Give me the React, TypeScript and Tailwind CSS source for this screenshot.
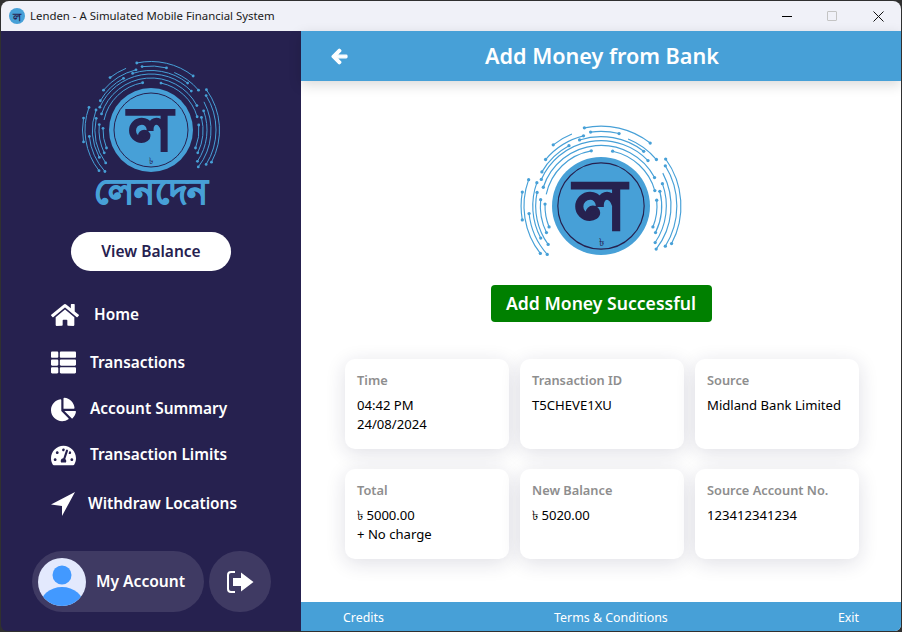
import React from 'react';
import {
  FaArrowLeft,
  FaChartPie,
  FaHome,
  FaTachometerAlt,
  FaThList,
} from 'react-icons/fa';

const BLUE = '#47a0d7';
const NAVY = '#26214f';

// r, start deg, end deg (clockwise from 12 o'clock), dot on start, dot on end
const ARCS: [number, number, number, boolean, boolean][] = [
  [68.5, -12, 38, true, true],
  [68.5, 54, 118, true, true],
  [66.5, -38, -22, true, false],
  [64, -8, 14, true, true],
  [62, 22, 50, false, true],
  [62, -50, -14, true, true],
  [65, 58, 122, true, true],
  [59.5, -18, 38, true, true],
  [60, 62, 128, false, true],
  [66, -128, -70, true, true],
  [68.5, -100, -80, true, true],
  [62, -132, -96, true, true],
  [58.5, -60, -28, true, true],
  [58.5, -118, -70, true, true],
  [56, -66, 46, true, true],
  [56, 70, 124, true, true],
  [56, -126, -78, true, true],
  [52, -72, 62, true, true],
  [52, 76, 116, true, true],
  [52, -116, -84, true, true],
  [48, -78, -10, false, true],
  [48, 12, 74, true, true],
  [48, 84, 112, true, true],
  [48, -112, -88, true, true],
];

const pt = (r: number, deg: number) => {
  const a = (deg * Math.PI) / 180;
  return [r * Math.sin(a), -r * Math.cos(a)];
};

const Logo = ({ size }: { size: number }) => (
  <svg width={size} height={size} viewBox="-72 -72 144 144" className="shrink-0">
    <g fill="none" stroke={BLUE} strokeWidth="1">
      {ARCS.map(([r, a, b], i) => {
        const [x1, y1] = pt(r, a);
        const [x2, y2] = pt(r, b);
        return <path key={i} d={`M${x1} ${y1}A${r} ${r} 0 0 1 ${x2} ${y2}`} />;
      })}
    </g>
    <g fill={BLUE}>
      {ARCS.flatMap(([r, a, b, s, e], i) => [
        s ? <circle key={`s${i}`} cx={pt(r, a)[0]} cy={pt(r, a)[1]} r="1.4" /> : null,
        e ? <circle key={`e${i}`} cx={pt(r, b)[0]} cy={pt(r, b)[1]} r="1.4" /> : null,
      ])}
    </g>
    <circle r="42" fill={BLUE} />
    <circle r="37" fill="none" stroke={NAVY} strokeWidth="1" />
    <text x="-1" y="20" textAnchor="middle" fontSize="60" fontWeight="700" fill={NAVY} stroke={NAVY} strokeWidth="2">ল</text>
    <text x="0" y="34" textAnchor="middle" fontSize="9" fill={NAVY}>৳</text>
  </svg>
);

const ArrowIcon = ({ size }: { size: number }) => (
  <svg width={size} height={size} viewBox="0 0 24 24" fill="white">
    <polygon points="0,12.5 24,0 11,24 11,14" />
  </svg>
);

const NAV = [
  { icon: FaHome, label: 'Home', size: 28, h: 'h-[48px]', gap: 'gap-[15px]' },
  { icon: FaThList, label: 'Transactions', size: 25, h: 'h-[47px]', gap: 'gap-[14px]' },
  { icon: FaChartPie, label: 'Account Summary', size: 25, h: 'h-[46px]', gap: 'gap-[14px]' },
  { icon: FaTachometerAlt, label: 'Transaction Limits', size: 25, h: 'h-[46px]', gap: 'gap-[14px]' },
  { icon: ArrowIcon, label: 'Withdraw Locations', size: 24, h: 'h-[52px]', gap: 'gap-[13px]' },
];

const CARDS = [
  { label: 'Time', lines: ['04:42 PM', '24/08/2024'] },
  { label: 'Transaction ID', lines: ['T5CHEVE1XU'] },
  { label: 'Source', lines: ['Midland Bank Limited'] },
  { label: 'Total', lines: ['৳ 5000.00', '+ No charge'] },
  { label: 'New Balance', lines: ['৳ 5020.00'] },
  { label: 'Source Account No.', lines: ['123412341234'] },
];

const App: React.FC = () => {
  return (
    <div className="w-[902px] h-[632px] bg-[#303030] p-px overflow-hidden font-['Noto_Sans','Open_Sans',sans-serif]">
      <div className="w-full h-full rounded-t-lg rounded-b-md overflow-hidden flex flex-col">
        {/* Title bar */}
        <div className="h-[30px] shrink-0 bg-[#f0f1f8] flex items-center pl-[8px] text-[#1a1a1a]">
          <div className="w-4 h-4 rounded-full bg-[#47a0d7] flex items-center justify-center text-[#26214f] text-[11px] leading-none font-bold">
            ল
          </div>
          <span className="ml-[5px] text-[11.4px]">Lenden - A Simulated Mobile Financial System</span>
          <div className="ml-auto flex items-center">
            <div className="w-[10px] h-px bg-black mr-[35px]"></div>
            <div className="w-[10px] h-[10px] border border-[#c4c4c4] rounded-[1px] mr-[36px]"></div>
            <svg width="11" height="11" viewBox="0 0 11 11" className="mr-[17px]">
              <path d="M0.5 0.5L10.5 10.5M10.5 0.5L0.5 10.5" stroke="#111" strokeWidth="1" />
            </svg>
          </div>
        </div>

        <div className="flex-1 flex min-h-0">
          {/* Sidebar */}
          <aside className="w-[300px] shrink-0 bg-[#26214f] flex flex-col text-white">
            <div className="h-[201px] flex flex-col items-center">
              <div className="h-[116px] mt-[27px] overflow-hidden">
                <Logo size={144} />
              </div>
              <div className="-mt-px text-[35px] leading-[36px] font-bold text-[#47a0d7] [-webkit-text-stroke:1px_#47a0d7]">লেনদেন</div>
            </div>
            <button className="self-center w-[160px] h-[39px] bg-white rounded-full text-[#26214f] text-[15.5px] font-semibold">
              View Balance
            </button>
            <nav className="mt-[20px] pl-[50px] flex flex-col">
              {NAV.map(({ icon: Icon, label, size, h, gap }) => (
                <div key={label} className={`flex items-center ${h} ${gap}`}>
                  <Icon size={size} />
                  <span className="text-[15.4px] font-semibold">{label}</span>
                </div>
              ))}
            </nav>
            <div className="mt-auto mb-[19px] pl-[31px] flex gap-[5px]">
              <div className="w-[172px] h-[61px] rounded-full bg-[#3f3a63] flex items-center pl-[6px]">
                <svg width="48" height="48" viewBox="0 0 48 48">
                  <defs>
                    <clipPath id="avatar-clip"><circle cx="24" cy="24" r="24" /></clipPath>
                  </defs>
                  <circle cx="24" cy="24" r="24" fill="#e3e9fd" />
                  <circle cx="24" cy="17" r="9.5" fill="#4299ff" />
                  <ellipse cx="24" cy="48" rx="22" ry="19" fill="#4299ff" clipPath="url(#avatar-clip)" />
                </svg>
                <span className="ml-[10px] text-[15.6px] font-semibold">My Account</span>
              </div>
              <div className="w-[62px] h-[61px] rounded-full bg-[#3f3a63] flex items-center justify-center">
                <svg width="27" height="22" viewBox="0 0 27 22">
                  <path d="M8 1H4Q1 1 1 4V18Q1 21 4 21H8" fill="none" stroke="white" strokeWidth="2" />
                  <path d="M6 7H14V1.5L26.5 11L14 20.5V15H6Z" fill="white" />
                </svg>
              </div>
            </div>
          </aside>

          {/* Main */}
          <main className="flex-1 flex flex-col bg-white min-w-0">
            <header className="h-[50px] shrink-0 bg-[#47a0d7] shadow-[0_4px_12px_rgba(0,0,0,0.15)] flex items-center relative text-white">
              <FaArrowLeft size={17} stroke="currentColor" strokeWidth={40} className="ml-[30px]" />
              <h1 className="absolute inset-x-0 pl-[2px] text-center text-[21.6px] font-semibold">Add Money from Bank</h1>
            </header>
            <div className="flex-1 flex flex-col items-center min-h-0">
              <div className="mt-[41px]">
                <Logo size={168} />
              </div>
              <div className="mt-[-5px] w-[221px] h-[37px] bg-[#008000] rounded-[4px] text-white text-[17.6px] font-semibold flex items-center justify-center">
                Add Money Successful
              </div>
              <div className="mt-[37px] ml-[2px] grid grid-cols-[164px_164px_164px] gap-x-[11px] gap-y-[20px]">
                {CARDS.map((card) => (
                  <div key={card.label} className="h-[90px] rounded-[10px] bg-white shadow-[0_4px_20px_rgba(30,25,70,0.14)] px-[12px] pt-[12px]">
                    <div className="text-[12.8px] font-semibold text-[#8e8e8e] leading-[19px]">{card.label}</div>
                    <div className="mt-[6px] text-[13.1px] text-black leading-[19px]">
                      {card.lines.map((line) => (
                        <div key={line}>{line}</div>
                      ))}
                    </div>
                  </div>
                ))}
              </div>
            </div>
            <footer className="h-[29px] shrink-0 bg-[#47a0d7] flex items-start pt-[7px] justify-between px-[42px] text-[12.4px] text-white">
              <span>Credits</span>
              <span>Terms &amp; Conditions</span>
              <span>Exit</span>
            </footer>
          </main>
        </div>
      </div>
    </div>
  );
};

export default App;
